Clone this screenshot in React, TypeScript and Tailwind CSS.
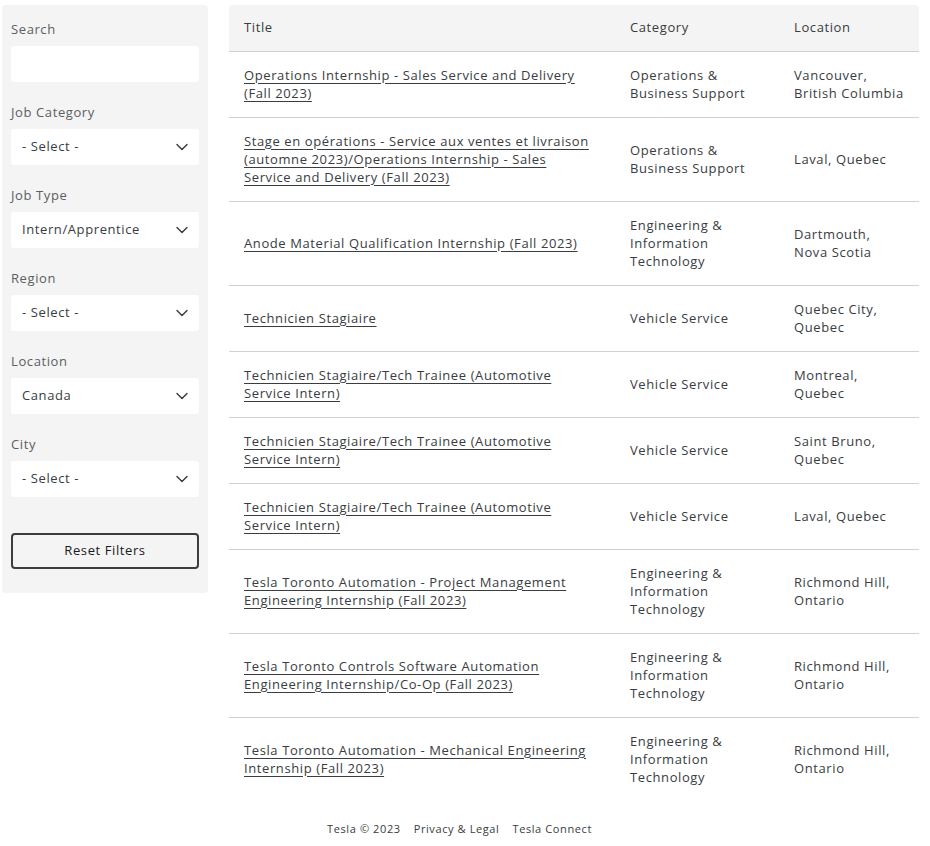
import { ChevronDown } from "lucide-react";

type Job = {
  title: string;
  category: string;
  location: string[];
};

const jobs: Job[] = [
  {
    title: "Operations Internship - Sales Service and Delivery (Fall 2023)",
    category: "Operations & Business Support",
    location: ["Vancouver,", "British Columbia"],
  },
  {
    title:
      "Stage en opérations - Service aux ventes et livraison (automne 2023)/Operations Internship - Sales Service and Delivery (Fall 2023)",
    category: "Operations & Business Support",
    location: ["Laval, Quebec"],
  },
  {
    title: "Anode Material Qualification Internship (Fall 2023)",
    category: "Engineering & Information Technology",
    location: ["Dartmouth,", "Nova Scotia"],
  },
  { title: "Technicien Stagiaire", category: "Vehicle Service", location: ["Quebec City,", "Quebec"] },
  {
    title: "Technicien Stagiaire/Tech Trainee (Automotive Service Intern)",
    category: "Vehicle Service",
    location: ["Montreal,", "Quebec"],
  },
  {
    title: "Technicien Stagiaire/Tech Trainee (Automotive Service Intern)",
    category: "Vehicle Service",
    location: ["Saint Bruno,", "Quebec"],
  },
  {
    title: "Technicien Stagiaire/Tech Trainee (Automotive Service Intern)",
    category: "Vehicle Service",
    location: ["Laval, Quebec"],
  },
  {
    title: "Tesla Toronto Automation - Project Management Engineering Internship (Fall 2023)",
    category: "Engineering & Information Technology",
    location: ["Richmond Hill,", "Ontario"],
  },
  {
    title: "Tesla Toronto Controls Software Automation Engineering Internship/Co-Op (Fall 2023)",
    category: "Engineering & Information Technology",
    location: ["Richmond Hill,", "Ontario"],
  },
  {
    title: "Tesla Toronto Automation - Mechanical Engineering Internship (Fall 2023)",
    category: "Engineering & Information Technology",
    location: ["Richmond Hill,", "Ontario"],
  },
];

const filters = [
  { label: "Job Category", value: "- Select -" },
  { label: "Job Type", value: "Intern/Apprentice" },
  { label: "Region", value: "- Select -" },
  { label: "Location", value: "Canada" },
  { label: "City", value: "- Select -" },
];

const FilterSelect = ({ label, value }: { label: string; value: string }) => (
  <div className="mt-[21px]">
    <p className="text-[13px] leading-[18px] text-[#5c5e62] mb-[8px]">{label}</p>
    <div className="h-9 bg-white rounded-[3px] flex items-center justify-between pl-[11px] pr-[7px] text-[13px] text-[#393c41]">
      <span>{value}</span>
      <ChevronDown size={20} strokeWidth={1.7} className="text-[#393c41]" />
    </div>
  </div>
);

export default function App() {
  return (
    <div
      className="min-h-screen bg-white text-[#393c41] pt-[5px] tracking-[0.6px]"
      style={{ fontFamily: "'Open Sans', 'Liberation Sans', sans-serif" }}
    >
      <div className="flex items-start pl-[2px] pr-[11px] gap-[21px]">
        {/* FILTERS */}
        <aside className="w-[206px] shrink-0 bg-[#f4f4f4] rounded-[4px] px-[9px] pt-[15px] pb-6">
          <p className="text-[13px] leading-[18px] text-[#5c5e62] mb-[8px]">Search</p>
          <input className="h-9 w-full bg-white rounded-[3px] outline-none px-3 text-[13px]" />
          {filters.map((f) => (
            <FilterSelect key={f.label} label={f.label} value={f.value} />
          ))}
          <button className="mt-9 w-full h-9 rounded-[4px] border-2 border-[#393c41] text-[13px] text-[#171a20] bg-transparent">
            Reset Filters
          </button>
        </aside>

        {/* JOB TABLE */}
        <div className="flex-1">
          <table className="w-full border-collapse text-[13px] leading-[18px]">
            <thead>
              <tr className="bg-[#f4f4f4] text-[#393c41] border-b border-[#d0d1d2]">
                <th className="text-left font-normal h-[46px] pl-[15px] pb-[2px] rounded-tl-[4px] w-[386px]">Title</th>
                <th className="text-left font-normal pl-[15px] pb-[2px] w-[164px]">Category</th>
                <th className="text-left font-normal pl-[15px] pb-[2px] rounded-tr-[4px]">Location</th>
              </tr>
            </thead>
            <tbody>
              {jobs.map((job, idx) => (
                <tr key={idx} className={idx < jobs.length - 1 ? "border-b border-[#d0d1d2]" : ""}>
                  <td className="pl-[15px] pr-6 pt-[14px] pb-[15px] align-middle">
                    <a className="underline decoration-[#393c41] underline-offset-[3px] text-[#393c41]">{job.title}</a>
                  </td>
                  <td className="pl-[15px] pr-3 pt-[14px] pb-[15px] align-middle">{job.category}</td>
                  <td className="pl-[15px] pr-2 pt-[14px] pb-[15px] align-middle">
                    {job.location.map((line) => (
                      <div key={line}>{line}</div>
                    ))}
                  </td>
                </tr>
              ))}
            </tbody>
          </table>
        </div>
      </div>

      {/* FOOTER */}
      <footer className="flex justify-center gap-[13px] text-[11px] text-[#393c41] pt-[20px] pr-[11px]">
        <span>Tesla © 2023</span>
        <span>Privacy &amp; Legal</span>
        <span>Tesla Connect</span>
      </footer>
    </div>
  );
}
